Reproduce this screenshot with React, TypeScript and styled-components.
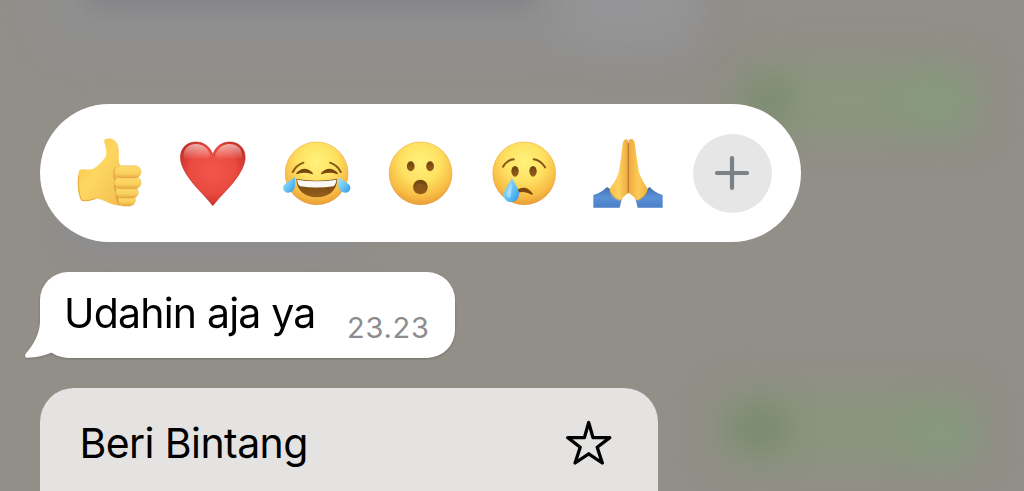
import React from 'react';
import styled, { createGlobalStyle } from 'styled-components';

const GlobalStyle = createGlobalStyle`
  * { box-sizing: border-box; }
  body { margin: 0; overflow: hidden; background: #928e88; }
`;

const Screen = styled.main`
  position: relative;
  width: 1024px;
  height: 491px;
  overflow: hidden;
  padding: 104px 40px 0;
  background: #928e88;
  font-family: Inter, 'Liberation Sans', sans-serif;
  color: #000;
`;

const Backdrop = styled.div`
  position: absolute;
  inset: 0;
`;

const Glow = styled.div<{ $x: number; $y: number; $w: number; $h: number; $color: string; $blur?: number }>`
  position: absolute;
  left: ${p => p.$x}px;
  top: ${p => p.$y}px;
  width: ${p => p.$w}px;
  height: ${p => p.$h}px;
  border-radius: 24px;
  background: ${p => p.$color};
  filter: blur(${p => p.$blur ?? 18}px);
`;

const Stack = styled.div`
  position: relative;
  display: flex;
  flex-direction: column;
  align-items: flex-start;
  gap: 30px;
`;

const ReactionBar = styled.div`
  display: flex;
  align-items: center;
  width: 761px;
  height: 138px;
  padding-left: 24.5px;
  border-radius: 69px;
  background: #fff;
`;

const EmojiList = styled.div`
  display: flex;
  gap: 13.7px;
`;

const EmojiSvg = styled.svg`
  display: block;
  width: 90px;
  height: 90px;
`;

const GradientDefs = styled.svg`
  display: block;
  width: 0;
  height: 0;
`;

const AddButton = styled.button`
  display: flex;
  align-items: center;
  justify-content: center;
  width: 79px;
  height: 79px;
  margin-left: 20px;
  padding: 0;
  border: 0;
  border-radius: 50%;
  background: #e6e6e7;
`;

const Bubble = styled.div`
  position: relative;
  display: flex;
  width: 415px;
  height: 86px;
  padding: 15.5px 0 0 24px;
  border-radius: 28px;
  background: #fff;
  filter: drop-shadow(0 1px 1px rgba(0, 0, 0, 0.2));
`;

const Tail = styled.svg`
  position: absolute;
  left: -16px;
  bottom: 0;
  width: 46px;
  height: 42px;
`;

const Message = styled.span`
  position: relative;
  width: 283px;
  font-size: 41px;
  line-height: 50px;
  letter-spacing: -0.8px;
  white-space: nowrap;
`;

const Time = styled.time`
  padding-top: 22px;
  font-size: 29px;
  line-height: 36px;
  letter-spacing: 0.75px;
  color: #8c8c8f;
`;

const Menu = styled.div`
  width: 618px;
  height: 120px;
  border-radius: 34px 34px 0 0;
  background: #e4e3e2;
`;

const MenuItem = styled.div`
  display: flex;
  align-items: center;
  justify-content: space-between;
  height: 110px;
  padding: 0 46px 0 39.5px;
  font-size: 41px;
  letter-spacing: -0.58px;
`;

function Emoji({ ox, label, children }: { ox: number; label: string; children: React.ReactNode }) {
  return (
    <EmojiSvg viewBox={`${ox} -6 270 270`} role="img" aria-label={label}>
      {children}
    </EmojiSvg>
  );
}

const Defs = () => (
  <GradientDefs>
    <defs>
      <radialGradient id="face" cx=".5" cy=".32" r=".7">
        <stop offset="0" stopColor="#fff27c" />
        <stop offset=".45" stopColor="#fee162" />
        <stop offset=".78" stopColor="#f8bd45" />
        <stop offset="1" stopColor="#e89a33" />
      </radialGradient>
      <linearGradient id="rim" x1="0" y1="0" x2="0" y2="1">
        <stop offset="0" stopColor="#efb63a" />
        <stop offset="1" stopColor="#dc9030" />
      </linearGradient>
      <linearGradient id="tear" x1="0" y1="0" x2="1" y2="1">
        <stop offset="0" stopColor="#a8e5fb" />
        <stop offset=".5" stopColor="#6cc6f5" />
        <stop offset="1" stopColor="#3093e0" />
      </linearGradient>
      <linearGradient id="brown" x1="0" y1="0" x2="0" y2="1">
        <stop offset="0" stopColor="#6c4211" />
        <stop offset="1" stopColor="#98601b" />
      </linearGradient>
      <radialGradient id="heart" cx=".5" cy=".45" r=".6">
        <stop offset="0" stopColor="#f2574b" />
        <stop offset=".6" stopColor="#ea4a3f" />
        <stop offset="1" stopColor="#c02a24" />
      </radialGradient>
      <linearGradient id="shine" x1="0" y1="0" x2="0" y2="1">
        <stop offset="0" stopColor="#fff" stopOpacity=".6" />
        <stop offset=".85" stopColor="#fff" stopOpacity="0" />
      </linearGradient>
      <linearGradient id="thumb" x1="0" y1="0" x2="1" y2="1">
        <stop offset="0" stopColor="#f7c546" />
        <stop offset=".45" stopColor="#fdd661" />
        <stop offset="1" stopColor="#f3bb4b" />
      </linearGradient>
      <linearGradient id="finger" x1="0" y1="0" x2="0" y2="1">
        <stop offset="0" stopColor="#ffdc6b" />
        <stop offset=".65" stopColor="#fad05c" />
        <stop offset="1" stopColor="#e5a642" />
      </linearGradient>
      <linearGradient id="palmL" x1="0" y1="0" x2="1" y2="0">
        <stop offset="0" stopColor="#f6c04a" />
        <stop offset=".5" stopColor="#ffd260" />
        <stop offset="1" stopColor="#eda93c" />
      </linearGradient>
      <linearGradient id="palmR" x1="1" y1="0" x2="0" y2="0">
        <stop offset="0" stopColor="#f0b03e" />
        <stop offset=".5" stopColor="#fdcb58" />
        <stop offset="1" stopColor="#eda93c" />
      </linearGradient>
      <linearGradient id="sleeve" x1="0" y1="0" x2="0" y2="1">
        <stop offset="0" stopColor="#426fb2" />
        <stop offset=".5" stopColor="#5a90d8" />
        <stop offset="1" stopColor="#4b80c8" />
      </linearGradient>
    </defs>
  </GradientDefs>
);

const Face = () => <circle cx="133.5" cy="130" r="94" fill="url(#face)" stroke="url(#rim)" strokeWidth="2" />;

const HEART = 'M128 227C106 198 74 171 53 139C40 119 31 100 31 82C31 53 52 36 77 36C101 36 120 50 128 74C136 50 155 36 179 36C204 36 225 53 225 82C225 100 216 119 203 139C182 171 150 198 128 227Z';

export default function App() {
  return (
    <>
      <GlobalStyle />
      <Defs />
      <Screen>
        <Backdrop>
          <Glow $x={30} $y={-40} $w={670} $h={105} $color="#909090" $blur={26} />
          <Glow $x={80} $y={-50} $w={460} $h={58} $color="#828186" $blur={12} />
          <Glow $x={565} $y={-30} $w={130} $h={75} $color="#959597" $blur={20} />
          <Glow $x={60} $y={195} $w={300} $h={60} $color="#8d8d90" $blur={16} />
          <Glow $x={740} $y={62} $w={242} $h={78} $color="#8a967d" $blur={19} />
          <Glow $x={742} $y={74} $w={52} $h={52} $color="#7e8b72" $blur={15} />
          <Glow $x={905} $y={84} $w={60} $h={36} $color="#849b80" $blur={17} />
          <Glow $x={716} $y={388} $w={266} $h={80} $color="#8a957d" $blur={19} />
          <Glow $x={726} $y={404} $w={66} $h={48} $color="#7c8971" $blur={15} />
          <Glow $x={910} $y={416} $w={60} $h={38} $color="#849a80" $blur={17} />
        </Backdrop>
        <Stack>
          <ReactionBar>
            <EmojiList>
              <Emoji ox={-14} label="thumbs up">
                <path d="M103 31C112 21 137 25 144 43C152 67 143 87 151 104L162 120L173 218C162 230 140 228 124 221C105 214 94 205 79 206C64 211 49 216 36 212C24 201 21 145 29 121C39 114 57 122 70 117C86 107 97 94 108 80C114 64 105 45 103 31Z" fill="url(#thumb)" />
                <path d="M27 137C24 161 27 193 36 211C49 215 65 210 78 205" fill="none" stroke="#e5a93c" strokeWidth="3" />
                <path d="M138 113C130 130 133 147 139 155C132 171 135 181 143 188C139 202 143 216 151 224" fill="none" stroke="#d69232" strokeWidth="6" opacity=".6" />
                <rect x="145" y="192" width="52" height="36" rx="18" fill="url(#finger)" stroke="#dfa441" strokeWidth="1.5" />
                <rect x="138" y="170" width="68" height="34" rx="17" fill="url(#finger)" stroke="#dfa441" strokeWidth="1.5" />
                <rect x="134" y="140" width="80" height="36" rx="18" fill="url(#finger)" stroke="#dfa441" strokeWidth="1.5" />
                <rect x="134" y="107" width="80" height="37" rx="18" fill="url(#finger)" stroke="#e5ae48" strokeWidth="1.5" />
              </Emoji>
              <Emoji ox={-6.4} label="red heart">
                <path d={HEART} fill="url(#heart)" />
                <path d={HEART} fill="none" stroke="#b52720" strokeWidth="3" opacity=".6" />
                <path d="M40 81C40 53 57 42 78 42C101 42 115 58 121 77C111 99 46 105 40 81Z" fill="url(#shine)" />
                <path d="M216 81C216 53 199 42 178 42C155 42 141 58 135 77C145 99 210 105 216 81Z" fill="url(#shine)" />
              </Emoji>
              <Emoji ox={-0.3} label="tears of joy">
                <Face />
                <path d="M62 126Q72 106 94 98M206 126Q196 106 174 98" fill="none" stroke="#875617" strokeWidth="6" strokeLinecap="round" />
                <path d="M75 130Q97 108 120 130Q97 121 75 130ZM149 130Q172 108 195 130Q172 121 149 130Z" fill="#78460f" stroke="#78460f" strokeWidth="5" strokeLinejoin="round" />
                <path d="M73 147Q134 157 195 147C195 181 170 202 134 202C98 202 73 181 73 147Z" fill="url(#brown)" />
                <path d="M75 149Q134 158 193 149Q192 163 184 169Q134 176 84 169Q76 163 75 149Z" fill="#faf8f5" />
                <path d="M68 140C70 158 71 176 61 184C49 193 34 187 33 175C32 159 54 155 68 140Z" fill="url(#tear)" />
                <path d="M200 140C198 158 197 176 207 184C219 193 234 187 235 175C236 159 214 155 200 140Z" fill="url(#tear)" />
              </Emoji>
              <Emoji ox={-0.2} label="surprised">
                <Face />
                <ellipse cx="104" cy="109" rx="11.5" ry="15" fill="url(#brown)" />
                <ellipse cx="162" cy="109" rx="11.5" ry="15" fill="url(#brown)" />
                <ellipse cx="133" cy="171" rx="22" ry="22" fill="url(#brown)" />
                <ellipse cx="133" cy="175" rx="15" ry="14" fill="#8b5719" />
              </Emoji>
              <Emoji ox={-2.1} label="crying">
                <Face />
                <path d="M70 110Q82 90 102 88M162 88Q182 90 196 112" fill="none" stroke="#875317" strokeWidth="6" strokeLinecap="round" />
                <ellipse cx="106" cy="124" rx="11" ry="16" fill="url(#brown)" />
                <ellipse cx="160" cy="124" rx="11" ry="16" fill="url(#brown)" />
                <path d="M110 184Q135 164 157 192Q133 177 110 188Z" fill="#7d4a10" stroke="#7d4a10" strokeWidth="5" strokeLinejoin="round" />
                <path d="M96 143C105 160 118 176 118 192C118 207 108 216 94 216C80 216 71 206 72 192C74 176 90 161 96 143Z" fill="url(#tear)" />
                <path d="M94 160Q82 180 81 193Q83 202 90 205Q99 184 94 160Z" fill="#d0f3ff" opacity=".55" />
              </Emoji>
              <Emoji ox={-3} label="folded hands">
                <path d="M28 195Q51 189 69 171L114 205L107 233H28Z" fill="url(#sleeve)" />
                <path d="M236 195Q214 189 197 171L154 205L161 233H236Z" fill="url(#sleeve)" />
                <path d="M132 31C125 24 118 29 116 42C113 69 109 96 105 121C101 145 87 162 77 177C73 189 92 210 108 213C115 203 125 195 133 188Z" fill="url(#palmL)" />
                <path d="M134 31C143 23 151 28 153 42C156 70 160 96 164 121C169 145 182 161 191 176C194 190 174 209 160 213C153 202 143 195 134 188Z" fill="url(#palmR)" />
                <path d="M133 38V190" stroke="#b97021" strokeWidth="3.5" />
                <path d="M72 173Q80 200 111 213M195 173Q188 200 158 213" fill="none" stroke="#29508c" strokeWidth="3" opacity=".4" />
              </Emoji>
            </EmojiList>
            <AddButton aria-label="add">
              <svg width="36" height="36" viewBox="0 0 36 36" fill="none" stroke="#7b8286" strokeWidth="4.2" strokeLinecap="round">
                <path d="M18 3V33M3 18H33" />
              </svg>
            </AddButton>
          </ReactionBar>
          <Bubble>
            <Tail viewBox="0 0 46 42">
              <path d="M16 0V6C15.6 18 9.5 29 1.8 37.5C0.8 39 0.6 42 3.5 41.8C13 41.5 22 39.5 28.5 36L34 28L22 0Z" fill="#fff" />
            </Tail>
            <Message>Udahin aja ya</Message>
            <Time>23.23</Time>
          </Bubble>
          <Menu>
            <MenuItem>
              <span>Beri Bintang</span>
              <svg width="46" height="46" viewBox="0 0 46 46" fill="none" stroke="#000" strokeWidth="3.3" strokeLinejoin="round">
                <path d="M22.7 2.5L27 17.6L43.8 17.6L31.2 27.2L36.3 43L22.7 33.8L9.1 43L14.2 27.2L1.8 17.6L18.4 17.6Z" />
              </svg>
            </MenuItem>
          </Menu>
        </Stack>
      </Screen>
    </>
  );
}
